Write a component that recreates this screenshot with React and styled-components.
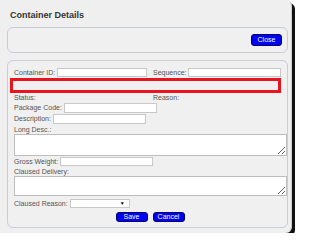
import React from 'react'
import styled, {createGlobalStyle} from 'styled-components'

const GlobalStyle = createGlobalStyle`
    body {
        margin: 0;
        background: #ffffff;
        font-family: "Liberation Sans", Arial, sans-serif;
    }
    * {
        box-sizing: border-box;
    }
`

const Dialog = styled.div`
    width: 292px;
    height: 233px;
    padding: 9px 3px 5px 7px;
    background: #efefef;
    border-right: 1px solid #c9ccd4;
    border-radius: 0 6px 6px 0;
    box-shadow: 3px 3px 0.5px #111;
    display: flex;
    flex-direction: column;
`

const Title = styled.div`
    font-size: 9px;
    line-height: 12px;
    font-weight: bold;
    color: #333;
    margin: 0 0 6px 3px;
`

const Panel = styled.div`
    border: 1px solid #c6cddb;
    border-radius: 6px;
    background: #f0f0f0;
`

const HeaderPanel = styled(Panel)`
    height: 26px;
    margin-bottom: 7px;
    padding-right: 5px;
    display: flex;
    align-items: center;
    justify-content: flex-end;
`

const FormPanel = styled(Panel)`
    height: 168px;
    padding: 6px 1px 5px 6px;
    display: flex;
    flex-direction: column;
`

const Button = styled.button`
    display: block;
    height: ${props => props.tall ? '12px' : '10px'};
    width: ${props => props.w}px;
    padding: 0;
    background: #0000f5;
    border: 1px solid #000066;
    border-radius: 3px;
    color: #ffffff;
    font-family: "Liberation Sans", Arial, sans-serif;
    font-size: 7px;
    line-height: 8px;
`

const Row = styled.div`
    display: flex;
    align-items: center;
    gap: 2px;
    height: ${props => props.h}px;
    margin-top: ${props => props.mt || 0}px;
    flex-shrink: 0;
`

const Split = styled.div`
    display: grid;
    grid-template-columns: 139px 1fr;
    height: ${props => props.h}px;
    align-items: center;
    flex-shrink: 0;
`

const Label = styled.span`
    font-size: 7px;
    line-height: 9px;
    color: #555;
    white-space: nowrap;
`

const Input = styled.input`
    display: block;
    width: ${props => props.w}px;
    height: ${props => props.h || 10}px;
    border: 1px solid #c8c8c8;
    background: #ffffff;
    padding: 0 2px;
    font-size: 7px;
    outline: none;
`

const TextArea = styled.textarea`
    display: block;
    flex-shrink: 0;
    width: 273px;
    height: ${props => props.h}px;
    border: 1px solid #bdbdbd;
    background: #ffffff;
    padding: 1px 2px;
    font-size: 7px;
    outline: none;
`

const Highlight = styled.div`
    width: 271px;
    height: 15px;
    margin-left: -4px;
    border: 3px solid #e8141e;
    flex-shrink: 0;
`

const SelectWrap = styled.div`
    position: relative;
    width: 60px;
    height: 9px;
`

const Select = styled.select`
    display: block;
    appearance: none;
    width: 60px;
    height: 9px;
    min-height: 0;
    border: 1px solid #c8c8c8;
    border-radius: 0;
    background: #ffffff;
    padding: 0 2px;
    font-size: 6px;
    line-height: 7px;
    outline: none;
`

const Arrow = styled.span`
    position: absolute;
    right: 5px;
    top: 1px;
    font-size: 5px;
    line-height: 7px;
    color: #000;
    pointer-events: none;
`

const Buttons = styled.div`
    display: flex;
    justify-content: center;
    gap: 5px;
    margin-top: 4px;
    height: 10px;
    flex-shrink: 0;
`

export default function App() {
    return (
        <>
            <GlobalStyle />
            <Dialog>
                <Title>Container Details</Title>
                <HeaderPanel>
                    <Button tall w={31}>Close</Button>
                </HeaderPanel>
                <FormPanel>
                    <Split h={11}>
                        <Row h={11}>
                            <Label>Container ID:</Label>
                            <Input w={90} h={9} />
                        </Row>
                        <Row h={11}>
                            <Label>Sequence:</Label>
                            <Input w={93} h={9} />
                        </Row>
                    </Split>
                    <Highlight />
                    <Split h={9}>
                        <Label>Status:</Label>
                        <Label>Reason:</Label>
                    </Split>
                    <Row h={11}>
                        <Label>Package Code:</Label>
                        <Input w={93} />
                    </Row>
                    <Row h={11}>
                        <Label>Description:</Label>
                        <Input w={93} />
                    </Row>
                    <Row h={10}>
                        <Label>Long Desc.:</Label>
                    </Row>
                    <TextArea h={22} />
                    <Row h={11}>
                        <Label>Gross Weight:</Label>
                        <Input w={93} h={9} />
                    </Row>
                    <Row h={9}>
                        <Label>Claused Delivery:</Label>
                    </Row>
                    <TextArea h={20} />
                    <Row h={9} mt={3}>
                        <Label>Claused Reason:</Label>
                        <SelectWrap>
                            <Select defaultValue="">
                                <option value=""></option>
                            </Select>
                            <Arrow>▼</Arrow>
                        </SelectWrap>
                    </Row>
                    <Buttons>
                        <Button w={32}>Save</Button>
                        <Button w={32}>Cancel</Button>
                    </Buttons>
                </FormPanel>
            </Dialog>
        </>
    )
}
